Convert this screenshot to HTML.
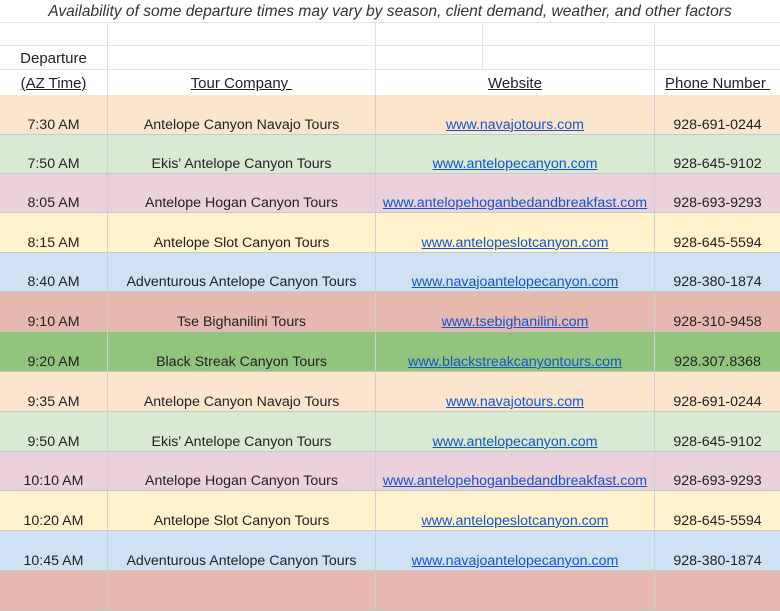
<!DOCTYPE html><html><head><style>
body{margin:0;width:780px;height:585px;overflow:hidden;background:#fff;font-family:"Liberation Sans",Arial,sans-serif;font-size:14.2px;color:#222;position:relative}
.r{position:absolute;left:0;width:780px;border-bottom:1px solid #d4d4d4;box-sizing:border-box}
.c{position:absolute;top:0;bottom:0;text-align:center;border-right:1px solid #d0d0d0;box-sizing:border-box;white-space:nowrap}
.c span{position:absolute;left:0;right:0;bottom:1px}
a{color:#1155cc;text-decoration:underline}
.u{text-decoration:underline}
</style></head><body>
<div class="r" style="top:0;height:23px;border-bottom-color:#e2e2e2"><div style="position:absolute;left:0;right:0;top:3px;text-align:center;font-style:italic;font-size:15.6px;color:#333">Availability of some departure times may vary by season, client demand, weather, and other factors</div></div>
<div class="r" style="top:23px;height:23px;border-bottom-color:#e2e2e2"><div class="c" style="left:0;width:108px;border-color:#e2e2e2"></div><div class="c" style="left:108px;width:268px;border-color:#e2e2e2"></div><div class="c" style="left:376px;width:107px;border-color:#e2e2e2"></div><div class="c" style="left:483px;width:172px;border-color:#e2e2e2"></div></div>
<div class="r" style="top:46px;height:24px;border-bottom-color:#e2e2e2"><div class="c" style="left:0;width:108px;border-color:#e2e2e2"><span style="bottom:2px;font-size:15px">Departure</span></div><div class="c" style="left:108px;width:268px;border-color:#e2e2e2"></div><div class="c" style="left:376px;width:107px;border-color:#e2e2e2"></div><div class="c" style="left:483px;width:172px;border-color:#e2e2e2"></div></div>
<div class="r" style="top:70px;height:25px;border-bottom:none"><div class="c" style="left:0;width:108px;border-color:#e2e2e2"><span class="u" style="bottom:3px;font-size:15px">(AZ Time)</span></div><div class="c" style="left:108px;width:268px;border-color:#e2e2e2"><span class="u" style="bottom:3px;font-size:15px">Tour Company&nbsp;</span></div><div class="c" style="left:376px;width:279px;border-color:#e2e2e2"><span class="u" style="bottom:3px;font-size:15px">Website</span></div><div class="c" style="left:655px;width:125px;border:none"><span class="u" style="bottom:3px;font-size:15px">Phone Number&nbsp;</span></div></div>
<div id="d"></div>
<script>
var rows=[["#fce5cd","7:30 AM","Antelope Canyon Navajo Tours","www.navajotours.com","928-691-0244"],
["#d9ead3","7:50 AM","Ekis' Antelope Canyon Tours","www.antelopecanyon.com","928-645-9102"],
["#ead1dc","8:05 AM","Antelope Hogan Canyon Tours","www.antelopehoganbedandbreakfast.com","928-693-9293"],
["#fff2cc","8:15 AM","Antelope Slot Canyon Tours","www.antelopeslotcanyon.com","928-645-5594"],
["#cfe2f3","8:40 AM","Adventurous Antelope Canyon Tours","www.navajoantelopecanyon.com","928-380-1874"],
["#e6b8af","9:10 AM","Tse Bighanilini Tours","www.tsebighanilini.com","928-310-9458"],
["#93c47d","9:20 AM","Black Streak Canyon Tours","www.blackstreakcanyontours.com","928.307.8368"],
["#fce5cd","9:35 AM","Antelope Canyon Navajo Tours","www.navajotours.com","928-691-0244"],
["#d9ead3","9:50 AM","Ekis' Antelope Canyon Tours","www.antelopecanyon.com","928-645-9102"],
["#ead1dc","10:10 AM","Antelope Hogan Canyon Tours","www.antelopehoganbedandbreakfast.com","928-693-9293"],
["#fff2cc","10:20 AM","Antelope Slot Canyon Tours","www.antelopeslotcanyon.com","928-645-5594"],
["#cfe2f3","10:45 AM","Adventurous Antelope Canyon Tours","www.navajoantelopecanyon.com","928-380-1874"],
["#e6b8af","","","",""]];
var tops=[95,135,174,213,253,292,332,372,412,452,491,531,571,611];var h="";
rows.forEach(function(r,i){var t=tops[i],ht=tops[i+1]-t;
h+='<div class="r" style="top:'+t+'px;height:'+ht+'px;background:'+r[0]+';border-bottom-color:#c8c8c8">'+
'<div class="c" style="left:0;width:108px"><span>'+r[1]+'</span></div>'+
'<div class="c" style="left:108px;width:268px"><span>'+r[2]+'</span></div>'+
'<div class="c" style="left:376px;width:279px"><span><a>'+r[3]+'</a></span></div>'+
'<div class="c" style="left:655px;width:125px;border:none"><span>'+r[4]+'</span></div></div>';});
document.getElementById("d").innerHTML=h;
</script>
</body></html>
